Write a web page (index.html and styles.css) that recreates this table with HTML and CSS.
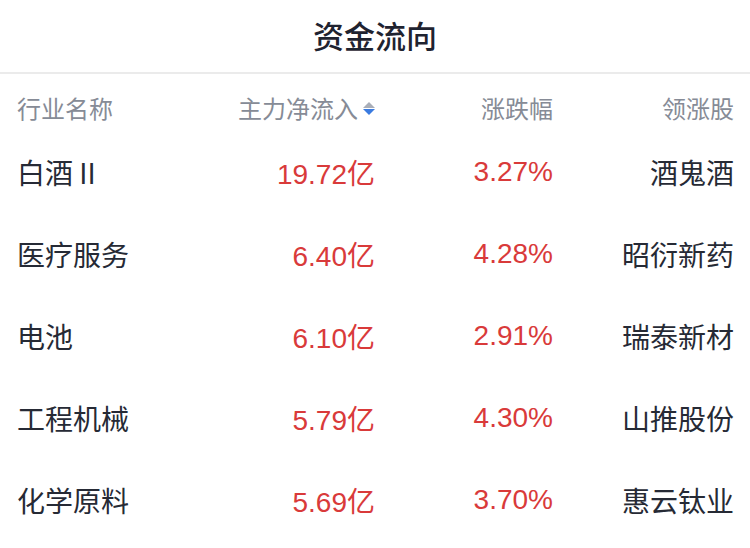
FILE: index.html
```html
<!DOCTYPE html>
<html lang="zh">
<head>
<meta charset="utf-8">
<link rel="stylesheet" href="styles.css">
</head>
<body>
<div class="panel">
  <div class="title">资金流向</div>
  <div class="table">
    <div class="row head">
      <div class="c name">行业名称</div>
      <div class="c flow">主力净流入<span class="sort"><span class="up"></span><span class="down"></span></span></div>
      <div class="c pct">涨跌幅</div>
      <div class="c lead">领涨股</div>
    </div>
    <div class="row">
      <div class="c name">白酒 II</div>
      <div class="c flow red">19.72亿</div>
      <div class="c pct red">3.27%</div>
      <div class="c lead">酒鬼酒</div>
    </div>
    <div class="row">
      <div class="c name">医疗服务</div>
      <div class="c flow red">6.40亿</div>
      <div class="c pct red">4.28%</div>
      <div class="c lead">昭衍新药</div>
    </div>
    <div class="row">
      <div class="c name">电池</div>
      <div class="c flow red">6.10亿</div>
      <div class="c pct red">2.91%</div>
      <div class="c lead">瑞泰新材</div>
    </div>
    <div class="row">
      <div class="c name">工程机械</div>
      <div class="c flow red">5.79亿</div>
      <div class="c pct red">4.30%</div>
      <div class="c lead">山推股份</div>
    </div>
    <div class="row">
      <div class="c name">化学原料</div>
      <div class="c flow red">5.69亿</div>
      <div class="c pct red">3.70%</div>
      <div class="c lead">惠云钛业</div>
    </div>
  </div>
</div>
</body>
</html>
```

FILE: styles.css
```css
html, body {
  margin: 0;
  padding: 0;
  background: #ffffff;
}
body {
  font-family: "Noto Sans CJK SC", "Noto Sans", sans-serif;
  color: #262a35;
}
.panel {
  width: 750px;
  height: 548px;
  overflow: hidden;
}
.title {
  box-sizing: border-box;
  height: 74px;
  padding-bottom: 4px;
  border-bottom: 2px solid #ebebeb;
  display: flex;
  align-items: center;
  justify-content: center;
  font-size: 31px;
  font-weight: 500;
  color: #1f2330;
}
.table {
  padding: 0 16px 0 17px;
}
.row {
  display: grid;
  grid-template-columns: 150px 208px 178px 181px;
  align-items: center;
  height: 82px;
  font-size: 28px;
  font-family: "Liberation Sans", "Noto Sans CJK SC", sans-serif;
}
.row .name, .row .lead {
  font-family: "Noto Sans CJK SC", sans-serif;
}
.row.head {
  box-sizing: border-box;
  height: 57px;
  padding-top: 10px;
  font-size: 24px;
  color: #868b96;
  font-family: "Noto Sans CJK SC", sans-serif;
}
.c.flow, .c.pct, .c.lead {
  text-align: right;
}
.head .c.flow {
  display: flex;
  align-items: center;
  justify-content: flex-end;
}
.red {
  color: #d93a3a;
}
.sort {
  display: inline-flex;
  flex-direction: column;
  gap: 1px;
  margin-left: 5px;
  margin-top: 2px;
}
.sort .up {
  width: 0;
  height: 0;
  border-left: 6px solid transparent;
  border-right: 6px solid transparent;
  border-bottom: 6px solid #a9aeb8;
}
.sort .down {
  width: 0;
  height: 0;
  border-left: 6px solid transparent;
  border-right: 6px solid transparent;
  border-top: 6px solid #3a7be0;
}
```
